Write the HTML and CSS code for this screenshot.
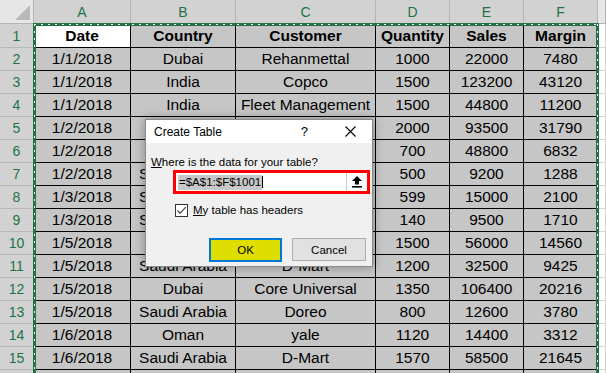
FILE: index.html
```html
<!DOCTYPE html>
<html>
<head>
<meta charset="utf-8">
<link rel="stylesheet" href="styles.css">
</head>
<body>
<div class="sheet">
  <div class="grid">
    <div class="corner"><svg width="15" height="15" viewBox="0 0 15 15"><polygon points="15,0 15,15 0,15" fill="#b9b9b9"/></svg></div>
    <div class="ch">A</div><div class="ch">B</div><div class="ch">C</div><div class="ch">D</div><div class="ch">E</div><div class="ch">F</div><div class="ch off"></div>

    <div class="rh">1</div><div class="c act b">Date</div><div class="c b">Country</div><div class="c b">Customer</div><div class="c b">Quantity</div><div class="c b">Sales</div><div class="c b">Margin</div><div class="x"></div>
    <div class="rh">2</div><div class="c">1/1/2018</div><div class="c">Dubai</div><div class="c">Rehanmettal</div><div class="c">1000</div><div class="c">22000</div><div class="c">7480</div><div class="x"></div>
    <div class="rh">3</div><div class="c">1/1/2018</div><div class="c">India</div><div class="c">Copco</div><div class="c">1500</div><div class="c">123200</div><div class="c">43120</div><div class="x"></div>
    <div class="rh">4</div><div class="c">1/1/2018</div><div class="c">India</div><div class="c">Fleet Management</div><div class="c">1500</div><div class="c">44800</div><div class="c">11200</div><div class="x"></div>
    <div class="rh">5</div><div class="c">1/2/2018</div><div class="c"></div><div class="c"></div><div class="c">2000</div><div class="c">93500</div><div class="c">31790</div><div class="x"></div>
    <div class="rh">6</div><div class="c">1/2/2018</div><div class="c"></div><div class="c"></div><div class="c">700</div><div class="c">48800</div><div class="c">6832</div><div class="x"></div>
    <div class="rh">7</div><div class="c">1/2/2018</div><div class="c left">S</div><div class="c"></div><div class="c">500</div><div class="c">9200</div><div class="c">1288</div><div class="x"></div>
    <div class="rh">8</div><div class="c">1/3/2018</div><div class="c left">S</div><div class="c"></div><div class="c">599</div><div class="c">15000</div><div class="c">2100</div><div class="x"></div>
    <div class="rh">9</div><div class="c">1/3/2018</div><div class="c left">S</div><div class="c"></div><div class="c">140</div><div class="c">9500</div><div class="c">1710</div><div class="x"></div>
    <div class="rh">10</div><div class="c">1/5/2018</div><div class="c"></div><div class="c"></div><div class="c">1500</div><div class="c">56000</div><div class="c">14560</div><div class="x"></div>
    <div class="rh">11</div><div class="c">1/5/2018</div><div class="c">Saudi Arabia</div><div class="c">D-Mart</div><div class="c">1200</div><div class="c">32500</div><div class="c">9425</div><div class="x"></div>
    <div class="rh">12</div><div class="c">1/5/2018</div><div class="c">Dubai</div><div class="c">Core Universal</div><div class="c">1350</div><div class="c">106400</div><div class="c">20216</div><div class="x"></div>
    <div class="rh">13</div><div class="c">1/5/2018</div><div class="c">Saudi Arabia</div><div class="c">Doreo</div><div class="c">800</div><div class="c">12600</div><div class="c">3780</div><div class="x"></div>
    <div class="rh">14</div><div class="c">1/6/2018</div><div class="c">Oman</div><div class="c">yale</div><div class="c">1120</div><div class="c">14400</div><div class="c">3312</div><div class="x"></div>
    <div class="rh">15</div><div class="c">1/6/2018</div><div class="c">Saudi Arabia</div><div class="c">D-Mart</div><div class="c">1570</div><div class="c">58500</div><div class="c">21645</div><div class="x"></div>
    <div class="rh"></div><div class="c"></div><div class="c"></div><div class="c"></div><div class="c"></div><div class="c"></div><div class="c"></div><div class="x"></div>
  </div>

  <div class="ants"></div>

  <div class="dialog">
    <div class="title">
      <span class="title-text">Create Table</span>
      <span class="help">?</span>
      <svg class="close" width="11" height="11" viewBox="0 0 11 11"><path d="M0.5 0.5 L10.5 10.5 M10.5 0.5 L0.5 10.5" stroke="#000" stroke-width="1.1" fill="none"/></svg>
    </div>
    <div class="body">
      <div class="lbl"><u>W</u>here is the data for your table?</div>
      <div class="range">
        <div class="input"><span class="sel">=$A$1:$F$1001</span><span class="caret"></span></div>
        <div class="collapse">
          <svg width="10" height="12" viewBox="0 0 10 12"><polygon points="5,0 10,5 7,5 7,8.5 3,8.5 3,5 0,5" fill="#000"/><rect x="0" y="10" width="10" height="1.6" fill="#000"/></svg>
        </div>
      </div>
      <div class="chkrow">
        <span class="box"><svg width="11" height="11" viewBox="0 0 11 11"><path d="M1.5 5.5 L4.2 8.2 L9.8 2.2" stroke="#444" stroke-width="1.2" fill="none"/></svg></span>
        <span><u>M</u>y table has headers</span>
      </div>
      <div class="btns">
        <div class="btn ok">OK</div>
        <div class="btn cancel">Cancel</div>
      </div>
    </div>
  </div>
</div>
</body>
</html>
```

FILE: styles.css
```css
html, body {
  margin: 0;
  padding: 0;
  background: #fff;
  overflow: hidden;
}

.sheet {
  position: relative;
  width: 606px;
  height: 373px;
  overflow: hidden;
  font-family: "Liberation Sans", Arial, sans-serif;
}

.grid {
  display: grid;
  grid-template-columns: 34px 97px 105px 140px 74px 74px 74px 1fr;
  grid-template-rows: 24px 24px repeat(15, 23px);
}

.grid > div {
  box-sizing: border-box;
  display: flex;
  align-items: center;
  justify-content: center;
  white-space: nowrap;
  overflow: hidden;
}

.grid > .corner {
  background: #e6e6e6;
  border-right: 1px solid #b5b5b5;
  border-bottom: 1px solid #b5b5b5;
  justify-content: flex-end;
  align-items: flex-end;
  padding: 0 3px 3px 0;
}

.corner svg { display: block; }

.ch {
  background: #d2d2d2;
  color: #217346;
  font-size: 14px;
  border-right: 1px solid #b5b5b5;
  border-bottom: 1px solid #b5b5b5;
}

.ch.off {
  background: #e6e6e6;
}

.rh {
  background: #d2d2d2;
  color: #217346;
  font-size: 14px;
  border-right: 1px solid #a8a8a8;
  border-bottom: 1px solid #b8b8b8;
}

.c {
  background: #c6c6c6;
  color: #000;
  font-size: 15.5px;
  border-right: 1px solid #000;
  border-bottom: 1px solid #000;
}

.grid > .c.left {
  justify-content: flex-start;
  padding-left: 8px;
}

.c.act {
  background: #fff;
}

.b {
  font-weight: bold;
}

.x {
  background: #fff;
  border-right: 1px solid #d4d4d4;
  border-bottom: 1px solid #d4d4d4;
}

.ants {
  position: absolute;
  left: 33px;
  top: 23px;
  width: 566px;
  height: 400px;
  box-sizing: border-box;
  border: 3px solid #217346;
}

.ants::after {
  content: "";
  position: absolute;
  left: -2px;
  top: -2px;
  right: -2px;
  bottom: -2px;
  background:
    repeating-linear-gradient(to right, #fff 0 2px, transparent 2px 7px) top left / 100% 1px no-repeat,
    repeating-linear-gradient(to right, #fff 0 2px, transparent 2px 7px) bottom left / 100% 1px no-repeat,
    repeating-linear-gradient(to bottom, #fff 0 2px, transparent 2px 7px) top left / 1px 100% no-repeat,
    repeating-linear-gradient(to bottom, #fff 0 2px, transparent 2px 7px) top right / 1px 100% no-repeat;
}

.dialog {
  position: absolute;
  left: 145px;
  top: 119px;
  width: 228px;
  height: 148px;
  box-sizing: border-box;
  background: #f0f0f0;
  border: 1px solid #8a8a8a;
  box-shadow: 0 0 10px rgba(0, 0, 0, 0.35);
  font-family: "Liberation Sans", Arial, sans-serif;
  font-size: 11.5px;
  color: #000;
}

.title {
  height: 23px;
  background: #fff;
  display: flex;
  align-items: center;
  padding-left: 8px;
  font-size: 12px;
}

.title-text {
  flex: 1;
}

.help {
  font-size: 13px;
  margin-right: 37px;
}

.close {
  display: block;
  margin-right: 16px;
}

.body {
  display: flex;
  flex-direction: column;
  padding-top: 12px;
}

.lbl {
  margin-left: 5px;
  height: 14px;
  line-height: 14px;
}

.range {
  margin: 1px 0 0 27px;
  width: 197px;
  height: 24px;
  box-sizing: border-box;
  border: 3px solid #ff0000;
  display: flex;
  background: #fff;
}

.input {
  flex: 1;
  display: flex;
  align-items: center;
  padding-left: 2px;
}

.sel {
  background: #c8c8c8;
  line-height: 15px;
  padding: 0 1px;
}

.caret {
  width: 1px;
  height: 12px;
  background: #000;
}

.collapse {
  width: 21px;
  box-sizing: border-box;
  border-left: 1px solid #c8c8c8;
  display: flex;
  align-items: center;
  justify-content: center;
  background: #fdfdfd;
}

.collapse svg { display: block; }

.chkrow {
  margin: 9px 0 0 29px;
  display: flex;
  align-items: center;
  gap: 5px;
  height: 14px;
}

.box {
  width: 13px;
  height: 13px;
  box-sizing: border-box;
  border: 1px solid #333;
  background: #fff;
  display: flex;
  align-items: center;
  justify-content: center;
}

.box svg { display: block; }

.btns {
  margin: 21px 0 0 63px;
  display: flex;
  gap: 10px;
  align-items: flex-start;
}

.btn {
  box-sizing: border-box;
  display: flex;
  align-items: center;
  justify-content: center;
}

.ok {
  width: 73px;
  height: 24px;
  background: #dede00;
  border: 2px solid #0078d7;
}

.cancel {
  width: 74px;
  height: 23px;
  background: #e1e1e1;
  border: 1px solid #adadad;
}
```
